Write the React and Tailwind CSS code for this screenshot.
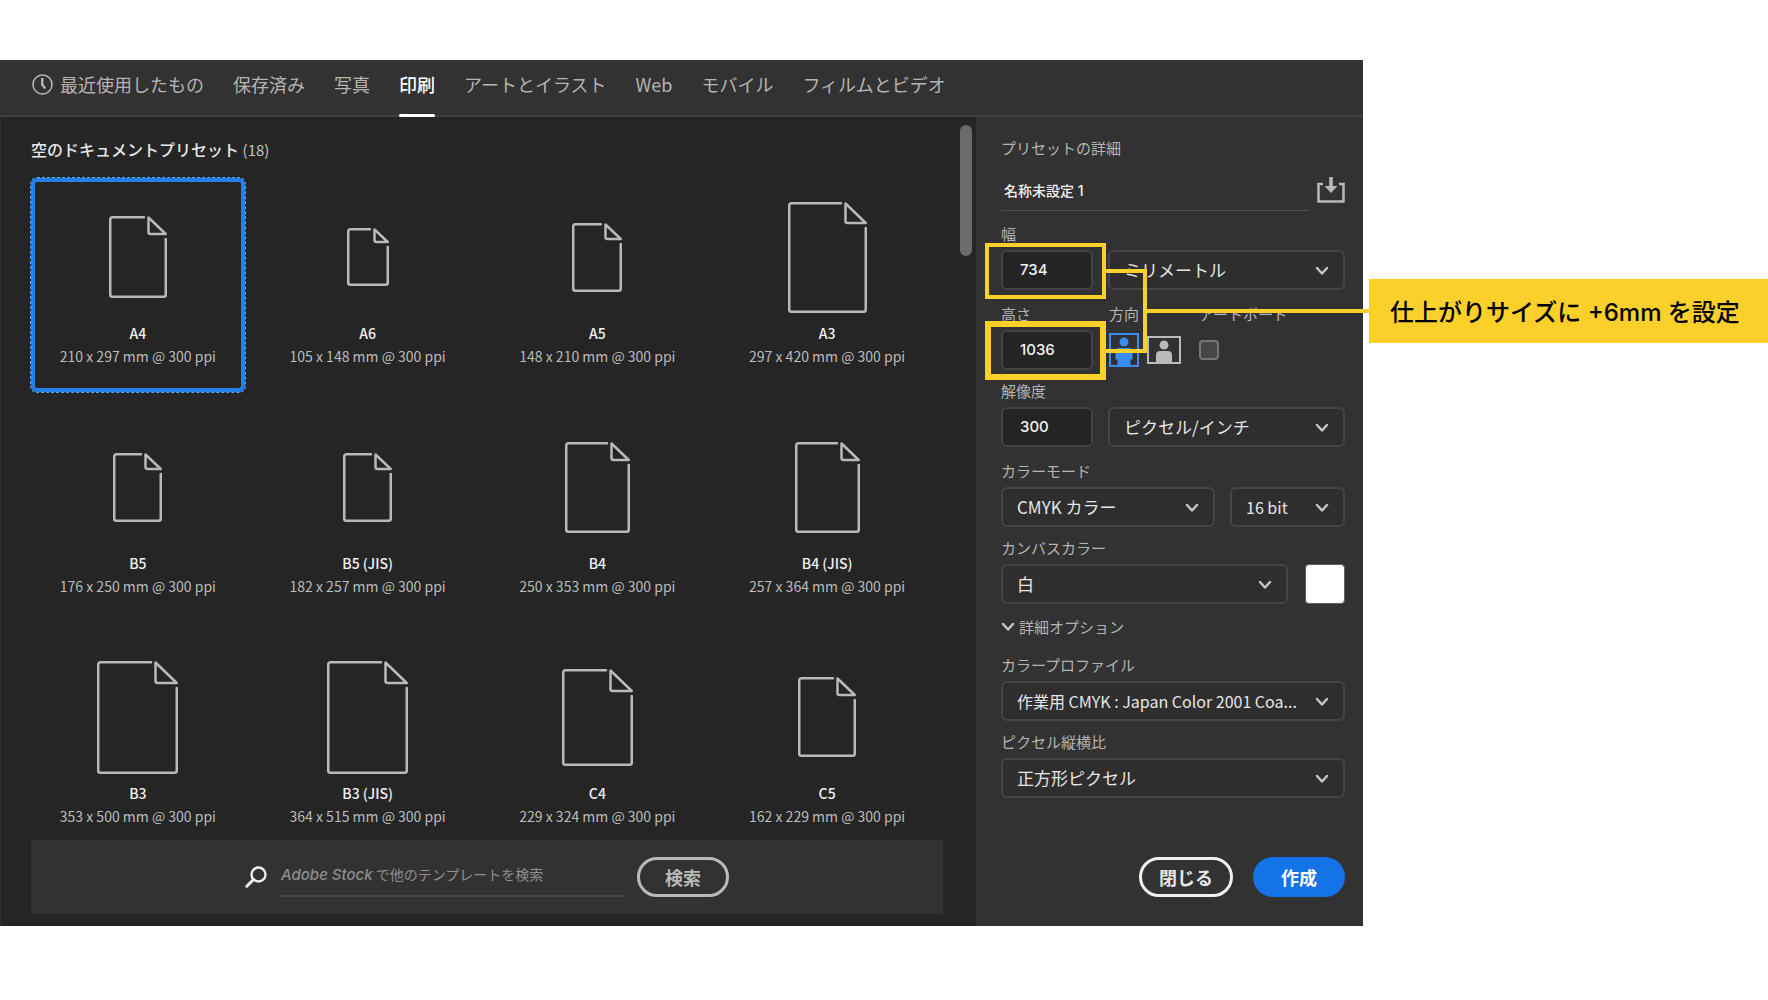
import React, { useState } from "react";

const tabs = [
    "最近使用したもの",
    "保存済み",
    "写真",
    "印刷",
    "アートとイラスト",
    "Web",
    "モバイル",
    "フィルムとビデオ",
];

// w / h / fold describe the page drawing inside each tile
const presets = [
    { name: "A4", size: "210 x 297 mm @ 300 ppi", w: 58, h: 82, fold: 19 },
    { name: "A6", size: "105 x 148 mm @ 300 ppi", w: 42, h: 58, fold: 15 },
    { name: "A5", size: "148 x 210 mm @ 300 ppi", w: 50, h: 69, fold: 17 },
    { name: "A3", size: "297 x 420 mm @ 300 ppi", w: 79, h: 111, fold: 22 },
    { name: "B5", size: "176 x 250 mm @ 300 ppi", w: 49, h: 69, fold: 17 },
    { name: "B5 (JIS)", size: "182 x 257 mm @ 300 ppi", w: 49, h: 69, fold: 17 },
    { name: "B4", size: "250 x 353 mm @ 300 ppi", w: 65, h: 91, fold: 19 },
    { name: "B4 (JIS)", size: "257 x 364 mm @ 300 ppi", w: 65, h: 91, fold: 19 },
    { name: "B3", size: "353 x 500 mm @ 300 ppi", w: 81, h: 113, fold: 23 },
    { name: "B3 (JIS)", size: "364 x 515 mm @ 300 ppi", w: 81, h: 113, fold: 23 },
    { name: "C4", size: "229 x 324 mm @ 300 ppi", w: 71, h: 97, fold: 23 },
    { name: "C5", size: "162 x 229 mm @ 300 ppi", w: 58, h: 80, fold: 19 },
];

const PageIcon = ({ w, h, fold }) => {
    const r = w - 1.25;
    const b = h - 1.25;
    const f = w - fold;
    return (
        <svg width={w} height={h} fill="none" stroke="#b9b9b9" strokeWidth="2.5" strokeLinecap="round" strokeLinejoin="round" className="overflow-visible">
            <path d={`M${f - 4} 1.25H3.25a2 2 0 0 0-2 2V${b - 2}a2 2 0 0 0 2 2H${r - 2}a2 2 0 0 0 2-2V${fold + 4}`} />
            <path d={`M${f + 0.5} 1.5V${fold - 3}a2 2 0 0 0 2 2H${r}Z`} />
        </svg>
    );
};

const Chevron = ({ className }) => (
    <svg width="14" height="10" viewBox="0 0 14 10" fill="none" stroke="#c4c4c4" strokeWidth="2.5" strokeLinecap="round" strokeLinejoin="round" className={className}>
        <path d="M2 2l5 5.5L12 2" />
    </svg>
);

const labelStyle = "block mb-1 text-[15px] leading-6 text-[#b4b4b4]";
const numberStyle = "block w-[92px] h-10 pl-[17px] pb-[2px] rounded-md border-2 border-[#434343] bg-[#242424] font-['Inter','Noto_Sans_CJK_JP',sans-serif] text-[15px] font-medium text-[#f2f2f2]";

const Select = ({ id, label, value, className, textSize = "text-[17px]" }) => (
    <div className={`relative ${className}`}>
        <select
            id={id}
            aria-label={label}
            defaultValue={value}
            className={`appearance-none w-full h-10 pl-[14px] pr-9 rounded-md border-2 border-[#454545] bg-[#2e2e2e] text-[#e6e6e6] ${textSize}`}
        >
            <option>{value}</option>
        </select>
        <Chevron className="absolute right-4 top-4 pointer-events-none" />
    </div>
);

const PortraitIcon = () => (
    <svg width="30" height="34" viewBox="0 0 30 34">
        <rect x="1" y="1" width="28" height="32" fill="none" stroke="#378ef0" strokeWidth="2" />
        <circle cx="15" cy="9" r="4.5" fill="#378ef0" />
        <path d="M10.5 15h9a4 4 0 0 1 4 4v7.500h-2V33h-13v-6.500h-2V19a4 4 0 0 1 4-4z" fill="#378ef0" />
    </svg>
);

const LandscapeIcon = () => (
    <svg width="34" height="28" viewBox="0 0 34 28">
        <rect x="1" y="1" width="32" height="26" fill="none" stroke="#b9b9b9" strokeWidth="2" />
        <circle cx="17" cy="9" r="4.500" fill="#b9b9b9" />
        <path d="M13 15h8a4 4 0 0 1 4 4v8H9v-8a4 4 0 0 1 4-4z" fill="#b9b9b9" />
    </svg>
);

const App = () => {
    const [activeTab, setActiveTab] = useState("印刷");
    const [selected, setSelected] = useState("A4");
    const [query, setQuery] = useState("");
    const [portrait, setPortrait] = useState(true);

    return (
        <div className="flex items-start min-h-screen pt-[60px] bg-white font-['Noto_Sans_CJK_JP',sans-serif]" lang="ja">
            <main className="flex-1 min-w-0 bg-[#323232]">
                {/* Category tabs */}
                <nav className="flex gap-[29px] h-[57px] pl-8 border-b-2 border-[#404040]">
                    {tabs.map((tab, index) => (
                        <button
                            key={tab}
                            type="button"
                            onClick={() => setActiveTab(tab)}
                            className={`relative flex items-center gap-[7px] pb-2 text-[18px] leading-6 whitespace-nowrap ${
                                tab === activeTab ? "text-white font-medium" : "text-[#b4b4b4]"
                            }`}
                        >
                            {index === 0 && (
                                <svg width="21" height="22" viewBox="0 -1 21 22" fill="none" stroke="#b4b4b4">
                                    <circle cx="10.500" cy="10.500" r="9.500" strokeWidth="1.600" />
                                    <path d="M10.200 4v6.500l3 4" strokeWidth="2.400" />
                                </svg>
                            )}
                            {tab}
                            {tab === activeTab && <span className="absolute inset-x-0 -bottom-[2px] h-[3px] rounded-full bg-white"></span>}
                        </button>
                    ))}
                </nav>

                <div className="flex">
                    {/* Preset list */}
                    <section className="relative flex flex-col flex-1 min-w-0 bg-[#252525] border-l border-[#323232]">
                        <div className="grow basis-[0px] min-h-0 overflow-hidden pt-5 pl-[30px] pr-[42px]">
                            <h2 className="mb-4 text-[16px] leading-6 font-medium text-[#e6e6e6]">
                                空のドキュメントプリセット <span className="font-normal text-[15px] text-[#c4c4c4]">(18)</span>
                            </h2>
                            <div className="grid grid-cols-4 gap-4">
                                {presets.map((preset) => (
                                    <button
                                        key={preset.name}
                                        type="button"
                                        onClick={() => setSelected(preset.name)}
                                        className={`flex flex-col items-center h-[214px] pt-[10px] border-4 rounded-md whitespace-nowrap ${
                                            preset.name === selected
                                                ? "border-[#2680eb] outline outline-dashed outline-[#5aa9fa]"
                                                : "border-transparent"
                                        }`}
                                    >
                                        <span className="flex items-center justify-center h-[130px]">
                                            <PageIcon w={preset.w} h={preset.h} fold={preset.fold} />
                                        </span>
                                        <span className="text-[14px] leading-[22px] font-medium text-[#f0f0f0]">{preset.name}</span>
                                        <span className="text-[14px] leading-6 text-[#bcbcbc]">{preset.size}</span>
                                    </button>
                                ))}
                            </div>
                        </div>
                        <div className="absolute right-1 top-2 w-3 h-[131px] rounded-full bg-[#6b6b6b]"></div>

                        {/* Stock search */}
                        <form
                            onSubmit={(e) => e.preventDefault()}
                            className="flex items-center justify-center h-[74px] ml-[30px] mr-[33px] mb-3 bg-[#323232]"
                        >
                            <svg width="22" height="22" viewBox="0 0 22 22" fill="none" stroke="#f0f0f0" strokeLinecap="round" className="mr-3">
                                <circle cx="13.500" cy="8.500" r="7" strokeWidth="2.400" />
                                <path d="M8.500 13.500L1.800 20.200" strokeWidth="3" />
                            </svg>
                            <div className="relative mr-[13px]">
                                <input
                                    id="stock"
                                    type="text"
                                    value={query}
                                    onChange={(e) => setQuery(e.target.value)}
                                    className="block w-[345px] h-10 px-[2px] border-b-2 border-[#484848] text-[14px] text-[#e6e6e6]"
                                />
                                {query === "" && (
                                    <label htmlFor="stock" className="absolute left-[2px] top-[7px] text-[14px] leading-5 text-[#8e8e8e] whitespace-nowrap">
                                        <span className="font-['Inter',sans-serif] italic text-[15px] font-medium">Adobe Stock</span> で他のテンプレートを検索
                                    </label>
                                )}
                            </div>
                            <button type="submit" className="w-[92px] h-10 rounded-full border-[3px] border-[#b9b9b9] text-[18px] leading-6 font-bold text-[#b9b9b9]">
                                検索
                            </button>
                        </form>
                    </section>

                    {/* Preset details */}
                    <section className="relative w-[387px] pt-[19px] pl-[25px] pr-[18px] pb-[29px]">
                        <h2 className="text-[15px] leading-6 text-[#b4b4b4]">プリセットの詳細</h2>
                        <div className="flex items-center justify-between mt-[9px]">
                            <input
                                type="text"
                                aria-label="名称"
                                defaultValue="名称未設定 1"
                                className="w-[308px] h-[42px] pl-[3px] border-b border-[#505050] font-['Inter','Noto_Sans_CJK_JP',sans-serif] text-[14px] font-medium text-[#f0f0f0]"
                            />
                            <button type="button" aria-label="プリセットを保存">
                                <svg width="28" height="26" viewBox="0 0 28 26" fill="none">
                                    <path d="M6 7H1.500v17.500h25V7H22" stroke="#b9b9b9" strokeWidth="2.500" />
                                    <path d="M12.200 0h3.600v9h4.700L14 16 7.500 9h4.700z" fill="#b9b9b9" />
                                </svg>
                            </button>
                        </div>

                        <div className="mt-[11px]">
                            <label htmlFor="width" className={labelStyle}>幅</label>
                            <div className="flex justify-between">
                                <div className="relative">
                                    <input id="width" type="text" defaultValue="734" className={numberStyle} />
                                    <div className="absolute -left-4 -right-[13px] -top-[7px] -bottom-[9px] border-4 border-[#fcd02a] pointer-events-none"></div>
                                </div>
                                <Select id="unit" label="単位" value="ミリメートル" className="w-[237px]" />
                            </div>
                        </div>

                        <div className="flex mt-3">
                            <div className="w-[108px]">
                                <label htmlFor="height" className={labelStyle}>高さ</label>
                                <div className="relative w-[92px]">
                                    <input id="height" type="text" defaultValue="1036" className={numberStyle} />
                                    <div className="absolute -left-4 -right-[13px] -top-[9px] -bottom-[10px] border-[6px] border-[#fcd02a] pointer-events-none"></div>
                                </div>
                            </div>
                            <div className="w-[90px]">
                                <span className={labelStyle}>方向</span>
                                <div className="flex items-center gap-2 h-10">
                                    <button type="button" aria-label="縦" aria-pressed={portrait} onClick={() => setPortrait(true)}>
                                        <PortraitIcon />
                                    </button>
                                    <button type="button" aria-label="横" aria-pressed={!portrait} onClick={() => setPortrait(false)}>
                                        <LandscapeIcon />
                                    </button>
                                </div>
                            </div>
                            <div>
                                <label htmlFor="artboard" className={labelStyle}>アートボード</label>
                                <div className="flex items-center h-10">
                                    <input
                                        id="artboard"
                                        type="checkbox"
                                        className="appearance-none w-5 h-5 rounded-sm border-2 border-[#757575] bg-[#464646] checked:bg-[#1473e6]"
                                    />
                                </div>
                            </div>
                        </div>

                        <div className="mt-[9px]">
                            <label htmlFor="resolution" className={labelStyle}>解像度</label>
                            <div className="flex justify-between">
                                <input id="resolution" type="text" defaultValue="300" className={numberStyle} />
                                <Select id="resolutionUnit" label="解像度の単位" value="ピクセル/インチ" className="w-[237px]" />
                            </div>
                        </div>

                        <div className="mt-3">
                            <label htmlFor="colorMode" className={labelStyle}>カラーモード</label>
                            <div className="flex justify-between">
                                <Select id="colorMode" value="CMYK カラー" className="w-[214px]" />
                                <Select id="bitDepth" label="ビット数" value="16 bit" className="w-[115px]" textSize="text-[16px]" />
                            </div>
                        </div>

                        <div className="mt-[9px]">
                            <label htmlFor="canvasColor" className={labelStyle}>カンバスカラー</label>
                            <div className="flex justify-between">
                                <Select id="canvasColor" value="白" className="w-[287px]" />
                                <button type="button" aria-label="カンバスカラーを選択" className="w-10 h-10 rounded-sm border border-[#606060] bg-white"></button>
                            </div>
                        </div>

                        <button type="button" className="flex items-center gap-1 mt-[11px] text-[15px] leading-6 text-[#b4b4b4]">
                            <Chevron />
                            詳細オプション
                        </button>

                        <div className="mt-[14px]">
                            <label htmlFor="colorProfile" className={labelStyle}>カラープロファイル</label>
                            <Select id="colorProfile" value="作業用 CMYK : Japan Color 2001 Coa..." textSize="text-[16px]" />
                        </div>

                        <div className="mt-[9px]">
                            <label htmlFor="pixelRatio" className={labelStyle}>ピクセル縦横比</label>
                            <Select id="pixelRatio" value="正方形ピクセル" />
                        </div>

                        <div className="flex justify-end gap-5 mt-[59px]">
                            <button type="button" className="w-[94px] h-10 rounded-full border-[3px] border-[#f0f0f0] text-[18px] leading-6 font-bold text-[#e6e6e6]">
                                閉じる
                            </button>
                            <button type="button" className="w-[92px] h-10 rounded-full bg-[#1473e6] text-[18px] leading-6 font-bold text-white">
                                作成
                            </button>
                        </div>

                        {/* Leader lines from the two size boxes to the callout */}
                        <div className="absolute left-[130px] top-[152px] w-[41px] h-[84px] border-4 border-l-0 border-[#fcd02a] pointer-events-none"></div>
                        <div className="absolute left-[171px] -right-[6px] top-[192px] h-1 bg-[#fcd02a] pointer-events-none"></div>
                    </section>
                </div>
            </main>

            {/* Callout */}
            <aside className="w-[405px] pl-[6px] pt-[219px]">
                <p className="pt-[18px] pb-[14px] pl-[21px] bg-[#fcd02a] text-[24px] leading-8 font-medium text-black whitespace-nowrap font-['Inter','Noto_Sans_CJK_JP',sans-serif]">
                    仕上がりサイズに +6mm を設定
                </p>
            </aside>
        </div>
    );
};

export default App;
